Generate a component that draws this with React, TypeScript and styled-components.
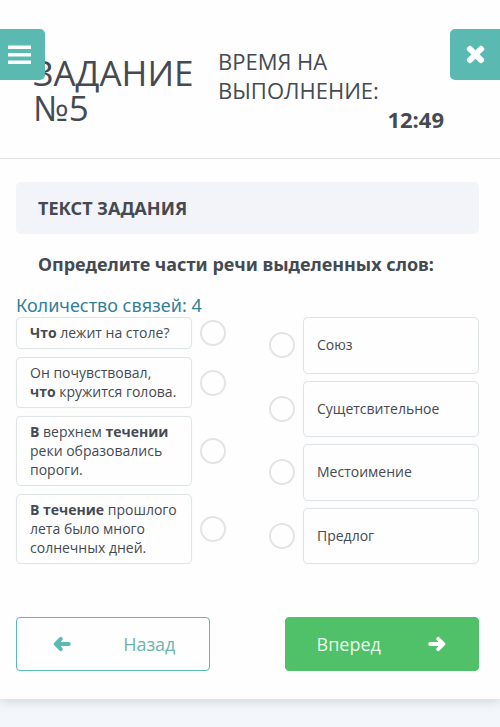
import React from "react";
import styled, { createGlobalStyle, css } from "styled-components";

const teal = "#5ab9b1";
const ink = "#454a52";

const GlobalStyle = createGlobalStyle`
  *, *::before, *::after { box-sizing: border-box; }
  body {
    margin: 0;
    background: #f3f7fb;
    color: ${ink};
    font-family: "Open Sans", "Noto Sans", sans-serif;
  }
  button { font: inherit; cursor: pointer; }
`;

const Page = styled.div`
  position: relative;
  padding-bottom: 28px;
`;

const Sheet = styled.main`
  background: #fefefe;
  padding-bottom: 28px;
  box-shadow: 0 2px 10px rgba(70, 90, 100, 0.22);
`;

const CornerButton = styled.button<{ $side: "left" | "right" }>`
  position: absolute;
  top: 29px;
  z-index: 1;
  display: flex;
  align-items: center;
  height: 51px;
  border: 0;
  background: ${teal};
  color: #fff;
  ${({ $side }) =>
    $side === "left"
      ? css`
          left: 0;
          width: 45px;
          padding: 0 0 0 8px;
          border-radius: 0 5px 5px 0;
        `
      : css`
          right: 0;
          width: 50px;
          padding: 0 0 0 16px;
          border-radius: 5px 0 0 5px;
        `}
`;

const Header = styled.header`
  display: flex;
  gap: 24px;
  padding: 47px 56px 25px 33px;
  border-bottom: 1px solid #dfe1e4;
`;

const Title = styled.h1`
  flex: 0 1 161px;
  margin: 0;
  padding-top: 8px;
  font-size: 35px;
  line-height: 35px;
  font-weight: 400;
`;

const Timer = styled.div`
  flex: 1;
  font-size: 22px;
  line-height: 29px;
`;

const TimerLabel = styled.div`
  max-width: 170px;
`;

const TimerValue = styled.div`
  text-align: right;
  line-height: 28px;
  font-weight: 700;
`;

const Content = styled.section`
  padding: 23px 21px 0 16px;
`;

const SectionHeading = styled.h2`
  margin: 0;
  padding: 14px 22px;
  border-radius: 5px;
  background: #f3f4f9;
  font-family: "Noto Sans", "Open Sans", sans-serif;
  font-size: 18px;
  line-height: 24px;
  font-weight: 700;
`;

const Question = styled.p`
  margin: 0;
  padding: 18px 22px;
  font-family: "Noto Sans", "Open Sans", sans-serif;
  font-size: 18px;
  line-height: 24px;
  font-weight: 700;
`;

const LinkCount = styled.p`
  margin: 0;
  color: #33809b;
  font-family: "Noto Sans", "Open Sans", sans-serif;
  font-size: 18px;
  line-height: 23px;
`;

const Board = styled.div`
  display: grid;
  grid-template-columns: 1fr 1fr;
  gap: 43px;
`;

const Prompts = styled.div`
  display: grid;
  gap: 8px;
`;

const Answers = styled.div`
  display: grid;
  grid-auto-rows: 1fr;
  gap: 7px;
`;

const Pair = styled.div`
  display: flex;
  align-items: center;
  gap: 8px;
`;

const Card = styled.div`
  flex: 1;
  align-self: stretch;
  display: flex;
  align-items: center;
  min-width: 0;
  padding: 5px 0 6px 13px;
  border: 1px solid #dfe4e6;
  border-radius: 5px;
  font-size: 14px;
  line-height: 19px;
  box-shadow: 0 0 1px #dfe4e6;
`;

const Socket = styled.button`
  flex: none;
  width: 26px;
  height: 26px;
  padding: 0;
  border: 2px solid #e2e4e5;
  border-radius: 50%;
  background: transparent;
`;

const Actions = styled.nav`
  display: flex;
  justify-content: space-between;
  padding-top: 53px;
`;

const ActionButton = styled.button<{ $primary?: boolean }>`
  display: flex;
  align-items: center;
  justify-content: space-between;
  width: 42%;
  height: 54px;
  padding: ${({ $primary }) => ($primary ? "0 32px 0 31px" : "0 34px 0 36px")};
  border: 1px solid ${({ $primary }) => ($primary ? "#50c168" : teal)};
  border-radius: 4px;
  background: ${({ $primary }) => ($primary ? "#50c168" : "#fefefe")};
  color: ${({ $primary }) => ($primary ? "#e9faec" : "#6bb5af")};
  font-size: 18px;
  line-height: 24px;
`;

const MenuIcon = () => (
  <svg width="23" height="20" viewBox="0 0 23 20" aria-hidden="true">
    <path d="M0 .5h23v3.5H0zM0 8h23v3.5H0zM0 15.500h23V19H0z" fill="currentColor" />
  </svg>
);

const CloseIcon = () => (
  <svg width="19" height="19" viewBox="0 0 19 19" aria-hidden="true">
    <path
      d="M4 4l11 11M15 4l-11 11"
      stroke="currentColor"
      strokeWidth="5"
      strokeLinecap="square"
    />
    <path
      d="M4 4l11 11M15 4l-11 11"
      stroke="currentColor"
      strokeWidth="6"
      strokeLinecap="round"
    />
  </svg>
);

const ArrowIcon = ({ color, flip }: { color: string; flip?: boolean }) => (
  <svg width="18" height="16" viewBox="0 0 18 16" aria-hidden="true">
    <g
      transform={flip ? "translate(18 0) scale(-1 1)" : undefined}
      fill="none"
      stroke={color}
      strokeWidth="3.800"
      strokeLinecap="round"
      strokeLinejoin="round"
    >
      <path d="M2.200 8H14M10.200 2.800L15.400 8L10.200 13.200" />
      <path d="M11 5L14 8L11 11z" fill={color} strokeWidth="1" />
    </g>
  </svg>
);

const prompts = [
  <span><b>Что</b> лежит на столе?</span>,
  <span>Он почувствовал,<br /><b>что</b> кружится голова.</span>,
  <span><b>В</b> верхнем <b>течении</b><br />реки образовались<br />пороги.</span>,
  <span><b>В течение</b> прошлого<br />лета было много<br />солнечных дней.</span>,
];

const answers = ["Союз", "Сущетсвительное", "Местоимение", "Предлог"];

export default function App() {
  return (
    <Page>
      <GlobalStyle />
      <CornerButton $side="left" aria-label="Меню"><MenuIcon /></CornerButton>
      <CornerButton $side="right" aria-label="Закрыть"><CloseIcon /></CornerButton>
      <Sheet>
        <Header>
          <Title>ЗАДАНИЕ №5</Title>
          <Timer>
            <TimerLabel>ВРЕМЯ НА ВЫПОЛНЕНИЕ:</TimerLabel>
            <TimerValue>12:49</TimerValue>
          </Timer>
        </Header>
        <Content>
          <SectionHeading>ТЕКСТ ЗАДАНИЯ</SectionHeading>
          <Question>Определите части речи выделенных слов:</Question>
          <LinkCount>Количество связей: 4</LinkCount>
          <Board>
            <Prompts>
              {prompts.map((text, i) => (
                <Pair key={i}>
                  <Card>{text}</Card>
                  <Socket aria-label={`Соединить фразу ${i + 1}`} />
                </Pair>
              ))}
            </Prompts>
            <Answers>
              {answers.map((text) => (
                <Pair key={text}>
                  <Socket aria-label={`Соединить: ${text}`} />
                  <Card>{text}</Card>
                </Pair>
              ))}
            </Answers>
          </Board>
          <Actions>
            <ActionButton><ArrowIcon color={teal} flip />Назад</ActionButton>
            <ActionButton $primary>Вперед<ArrowIcon color="#ffffff" /></ActionButton>
          </Actions>
        </Content>
      </Sheet>
    </Page>
  );
}
